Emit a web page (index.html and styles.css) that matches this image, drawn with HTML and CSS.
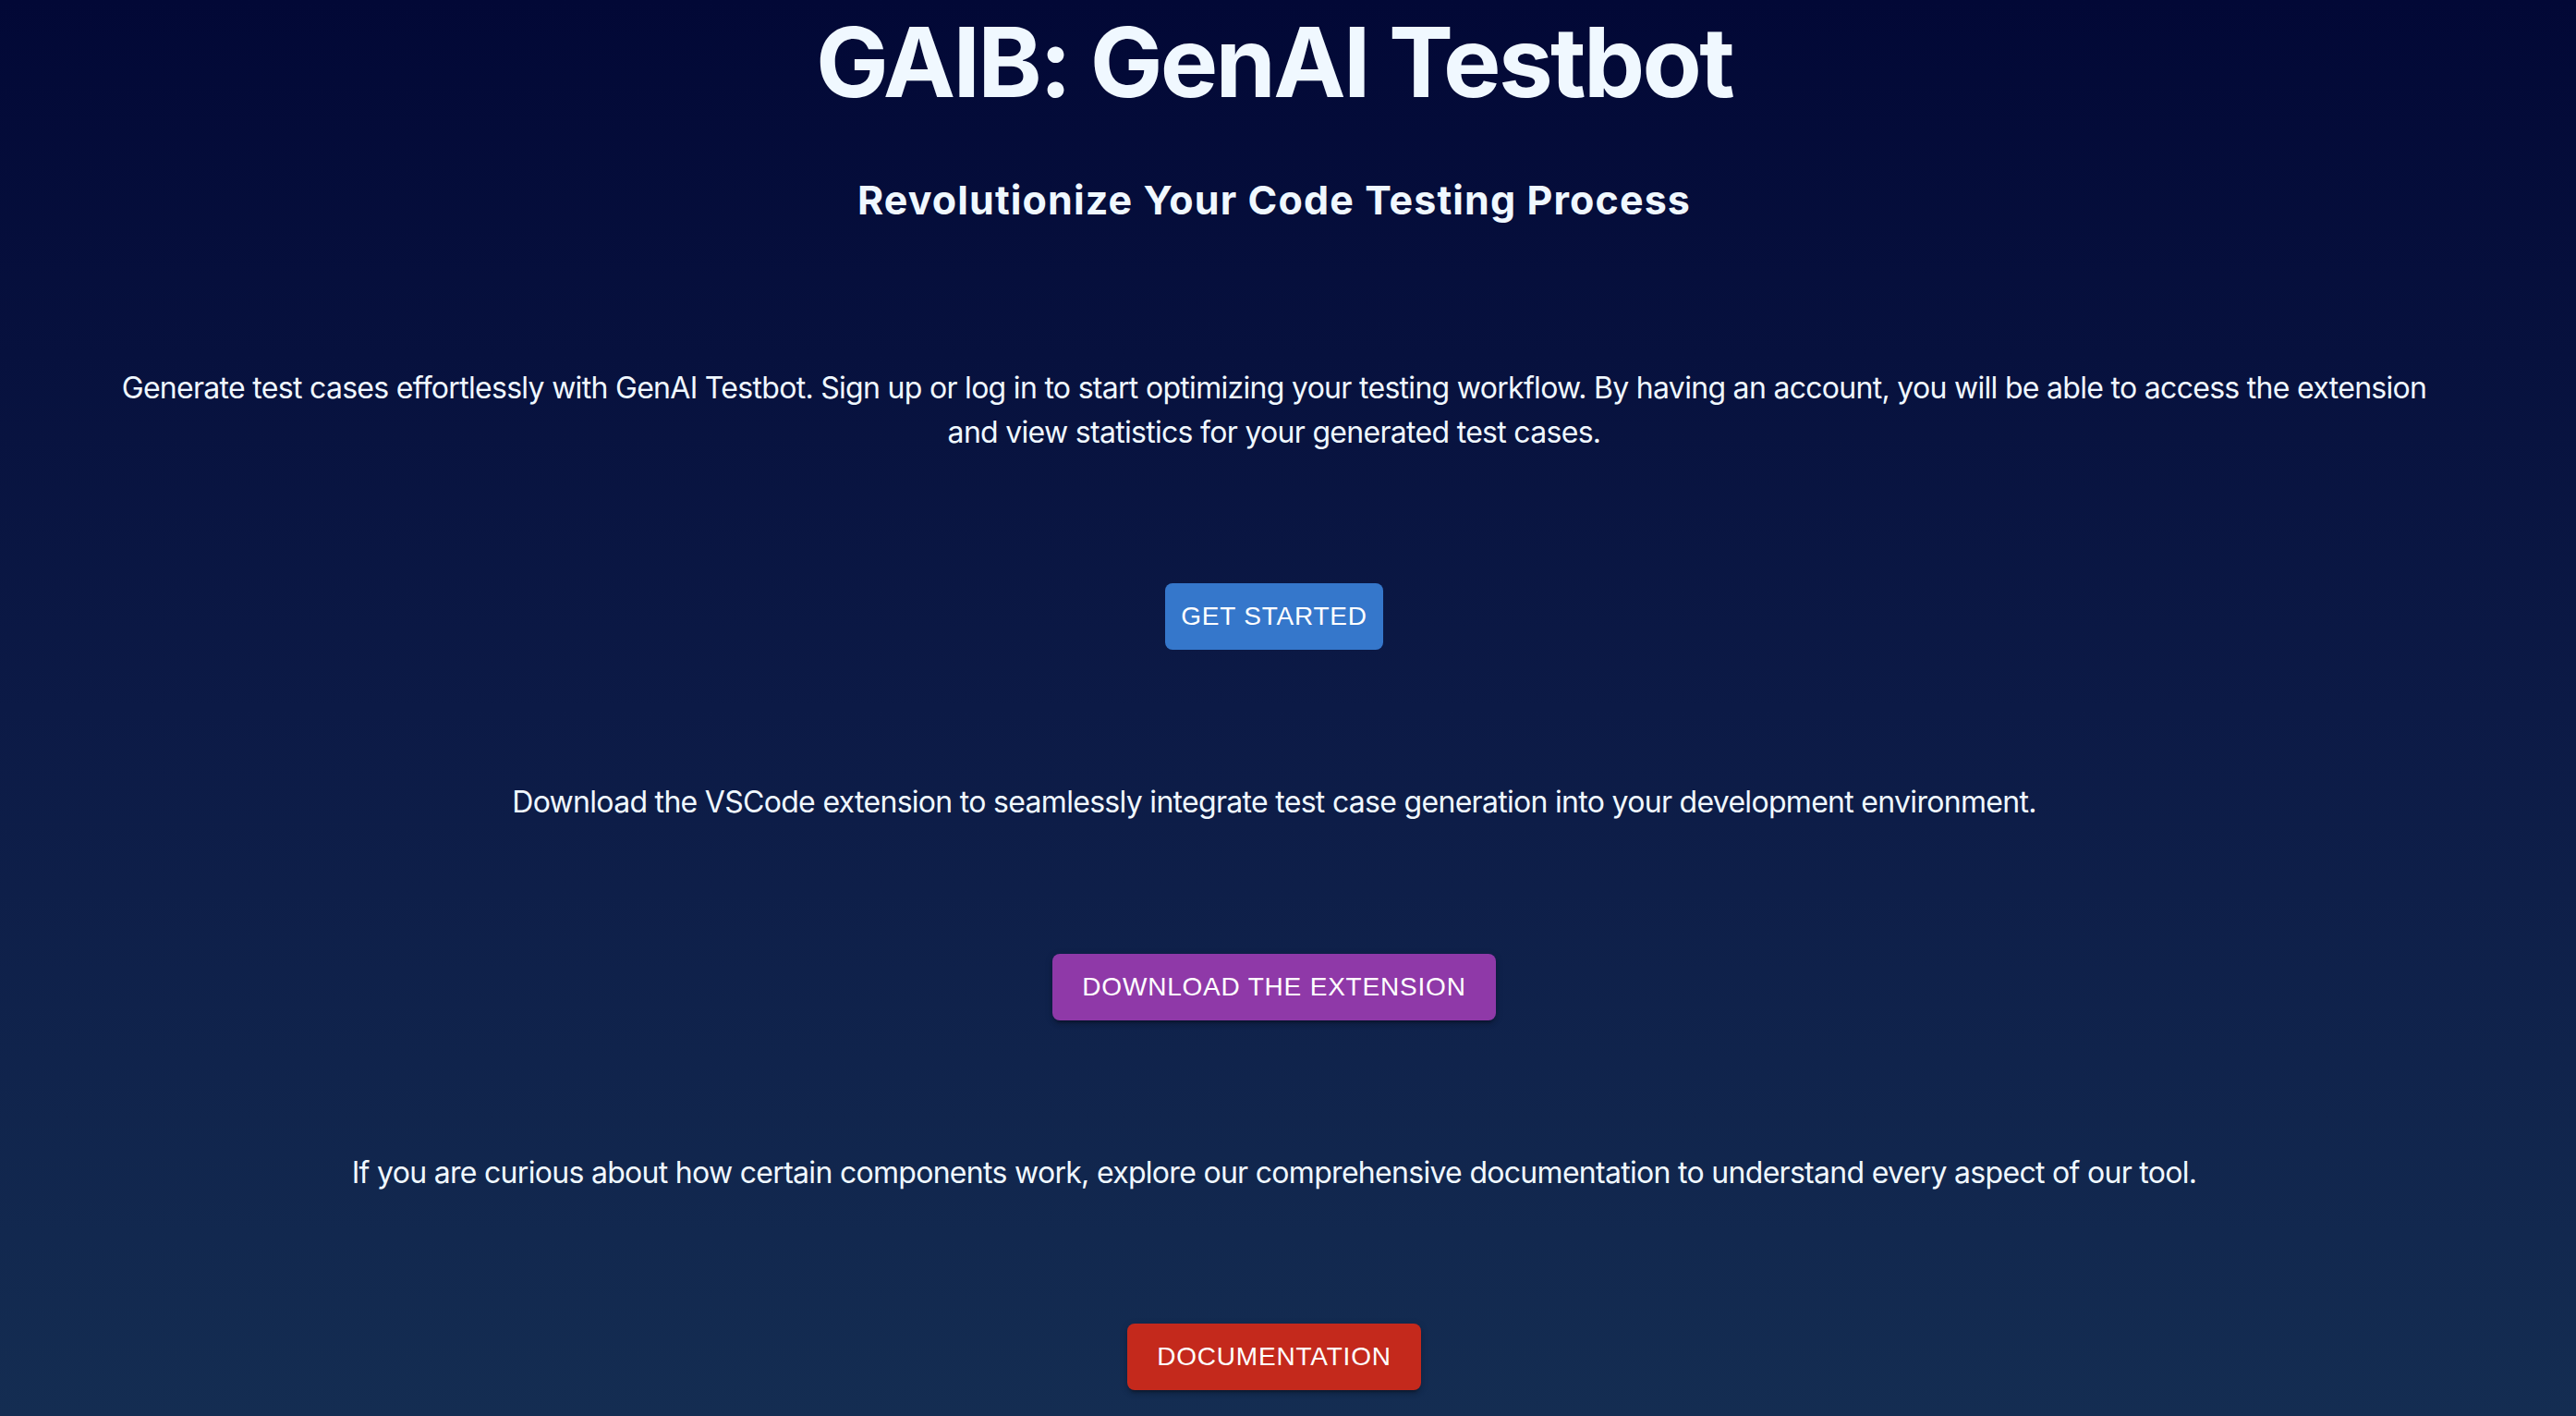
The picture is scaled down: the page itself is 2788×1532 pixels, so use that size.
FILE: index.html
```html
<!DOCTYPE html>
<html lang="en">
<head>
<meta charset="utf-8">
<title>GAIB: GenAI Testbot</title>
<link rel="stylesheet" href="styles.css">
</head>
<body>
<main class="page">
  <h1 class="title">GAIB: GenAI Testbot</h1>
  <h2 class="subtitle">Revolutionize Your Code Testing Process</h2>
  <p class="text text-wide">Generate test cases effortlessly with GenAI Testbot. Sign up or log in to start optimizing your testing workflow. By having an account, you will be able to access the extension and view statistics for your generated test cases.</p>
  <button class="btn btn-blue">Get Started</button>
  <p class="text">Download the VSCode extension to seamlessly integrate test case generation into your development environment.</p>
  <button class="btn btn-purple">Download the Extension</button>
  <p class="text">If you are curious about how certain components work, explore our comprehensive documentation to understand every aspect of our tool.</p>
  <button class="btn btn-red">Documentation</button>
</main>
</body>
</html>
```

FILE: styles.css
```css
html, body {
  margin: 0;
  padding: 0;
  height: 100%;
}
body {
  background: linear-gradient(to bottom, #020836 0%, #0c1a46 50%, #142d52 100%);
  color: #f0f8ff;
  font-family: Inter, "Noto Sans", sans-serif;
  overflow: hidden;
}
.page {
  width: 2758px;
  display: flex;
  flex-direction: column;
  align-items: center;
  text-align: center;
}
.title {
  margin: 4px 0 0;
  font-size: 105px;
  line-height: 1.2;
  font-weight: 700;
  letter-spacing: -2.7px;
}
.subtitle {
  margin: 61px 0 0;
  font-size: 43px;
  line-height: 1.2;
  font-weight: 700;
  letter-spacing: 1.1px;
}
.text {
  margin: 141px 0 0;
  font-size: 32px;
  line-height: 48px;
  font-weight: 400;
  letter-spacing: -0.7px;
}
.text:first-of-type {
  margin-top: 153px;
}
.text-wide {
  max-width: 2540px;
}
.btn {
  margin-top: 139.5px;
  border: none;
  border-radius: 8px;
  padding: 0 32px;
  height: 72px;
  color: #ffffff;
  font-family: "Liberation Sans", Arial, sans-serif;
  font-size: 28px;
  font-weight: 400;
  letter-spacing: 0.8px;
  text-transform: uppercase;
  box-shadow: 0 6px 2px -4px rgba(0,0,0,0.2), 0 4px 4px 0 rgba(0,0,0,0.14), 0 2px 10px 0 rgba(0,0,0,0.12);
  cursor: pointer;
}
.btn-blue {
  background: #3577cb;
  padding: 0 17px 0 17px;
  box-shadow: none;
}
.btn-purple { background: #8f39a8; }
.btn-red { background: #c4291c; }
```
